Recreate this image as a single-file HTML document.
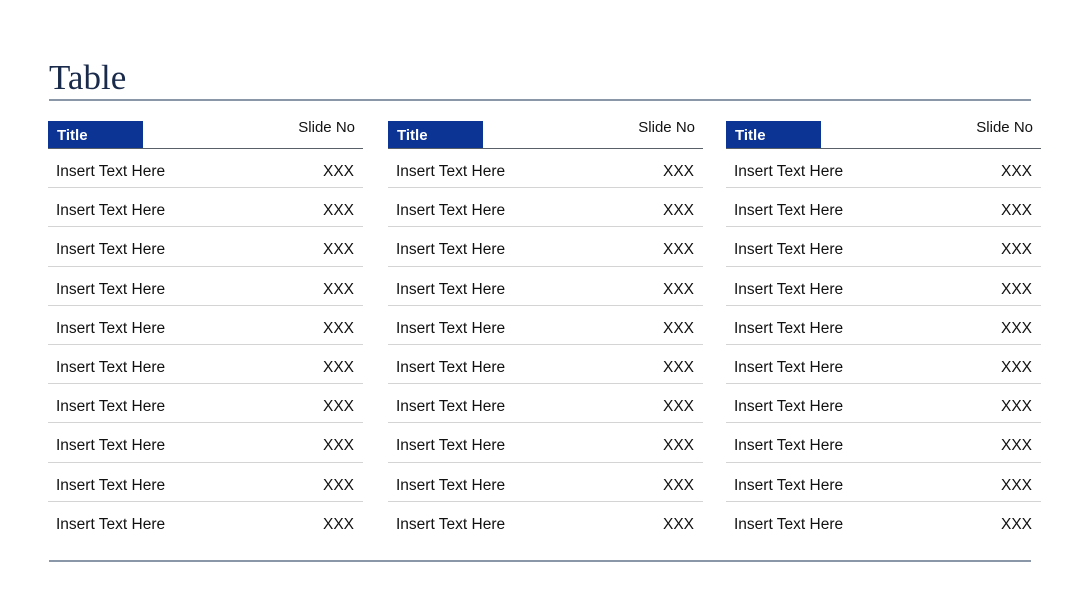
<!DOCTYPE html>
<html><head><style>
body{margin:0;width:1080px;height:608px;background:#fff;position:relative;overflow:hidden;font-family:"Liberation Sans",Arial,sans-serif;}
.h1{position:absolute;left:49px;top:58px;font-family:"Liberation Serif",serif;font-size:35px;color:#1a2a4a;}
.hl{position:absolute;left:49px;width:982px;height:2px;background:#8a97a8;}
.col{position:absolute;top:121px;width:315px;}
.tb{position:absolute;left:0;top:0;width:95px;height:27px;background:#0c3494;color:#fff;font-weight:bold;font-size:15px;line-height:29px;padding-left:9px;box-sizing:border-box;}
.sn{position:absolute;right:8px;top:-2px;font-size:15px;color:#111;}
.hline{position:absolute;left:0;top:27px;width:100%;height:1px;background:#5a6068;}
.row{position:absolute;left:0;width:100%;height:39px;font-size:15.5px;color:#111;}
.row span{position:absolute;top:14px}
.row .a{left:8px}.row .b{right:9px}
.row.s{border-bottom:1px solid #d4d4d4;}
</style></head><body>
<div class="h1">Table</div>
<div class="hl" style="top:99px"></div>
<div class="hl" style="top:560px"></div>
<div id="c"></div>
<script>
var xs=[48,388,726],h='';
xs.forEach(function(x){
 h+='<div class="col" style="left:'+x+'px"><div class="tb">Title</div><div class="sn">Slide No</div><div class="hline"></div>';
 for(var i=0;i<10;i++){var t=28+i*39.2;h+='<div class="row'+(i<9?' s':'')+'" style="top:'+t+'px;height:'+(i<9?38.2:39)+'px"><span class="a">Insert Text Here</span><span class="b">XXX</span></div>';}
 h+='</div>';
});
document.getElementById('c').innerHTML=h;
</script>
</body></html>
